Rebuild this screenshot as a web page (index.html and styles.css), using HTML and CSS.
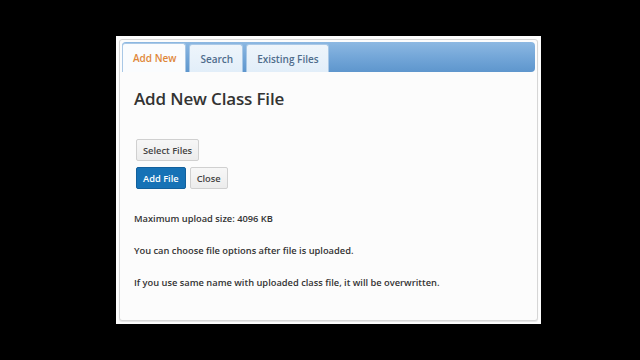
FILE: index.html
```html
<!DOCTYPE html>
<html>
<head>
<meta charset="utf-8">
<link rel="stylesheet" href="styles.css">
</head>
<body>
<div class="stage">
  <div class="dialog">
    <div class="panel">
      <div class="tabbar">
        <div class="tab active">Add New</div>
        <div class="tab">Search</div>
        <div class="tab">Existing Files</div>
      </div>
      <div class="content">
        <h1 class="title">Add New Class File</h1>
        <div class="row"><button class="btn">Select Files</button></div>
        <div class="row gap"><button class="btn primary">Add File</button><button class="btn">Close</button></div>
        <p class="note first">Maximum upload size: 4096 KB</p>
        <p class="note">You can choose file options after file is uploaded.</p>
        <p class="note">If you use same name with uploaded class file, it will be overwritten.</p>
      </div>
    </div>
  </div>
</div>
</body>
</html>
```
FILE: styles.css
```css
html, body { margin: 0; padding: 0; background: #000; }
body { width: 640px; height: 360px; overflow: hidden; font-family: "Open Sans", "Liberation Sans", sans-serif; }
.stage { padding: 36px 0 0 116px; }
.dialog {
  width: 425px; height: 288px; background: #fdfdfd;
  padding: 3px; box-sizing: border-box;
}
.panel {
  height: 282px; box-sizing: border-box; border: 1px solid #d6d6d6; border-radius: 3px;
  padding: 2px 2px; background: #fcfcfc;
  box-shadow: 0 1px 1px #e4e4e4;
}
.tabbar {
  display: flex; gap: 3px; height: 30px; align-items: flex-end;
  background: linear-gradient(#8cb8e2, #6fa3d6 60%, #5e96cd);
  border-radius: 4px; padding-left: 0;
}
.tab {
  height: 28px; box-sizing: border-box; padding: 0 9px 0 10px;
  display: flex; align-items: center;
  background: linear-gradient(#eef5fb, #e2eef9);
  border: 1px solid #a9c8e6; border-bottom: none;
  border-radius: 3px 3px 0 0;
  font-size: 10px; font-weight: 600; color: #4f6d8c;
}
.tab.active { background: #fafcfe; color: #e0873a; height: 29px; }
.content { padding: 15px 0 0 12px; }
.title { margin: 0; font-size: 17px; font-weight: 600; color: #333; letter-spacing: -0.15px; }
.row { display: flex; gap: 4px; margin-left: 2px; }
.title + .row { margin-top: 29px; }
.row.gap { margin-top: 6px; }
.btn {
  font-family: inherit; font-size: 9.3px; font-weight: 600;
  height: 22px; padding: 0 6px; border-radius: 2px;
  background: linear-gradient(#f7f7f7, #ececec); color: #444;
  border: 1px solid #d0d0d0;
}
.btn.primary { background: #1672b6; border-color: #12609c; color: #fff; }
.note { margin: 0; font-size: 9.3px; font-weight: 600; color: #333; }
.note.first { margin-top: 23px; }
.note + .note { margin-top: 19px; }
```
